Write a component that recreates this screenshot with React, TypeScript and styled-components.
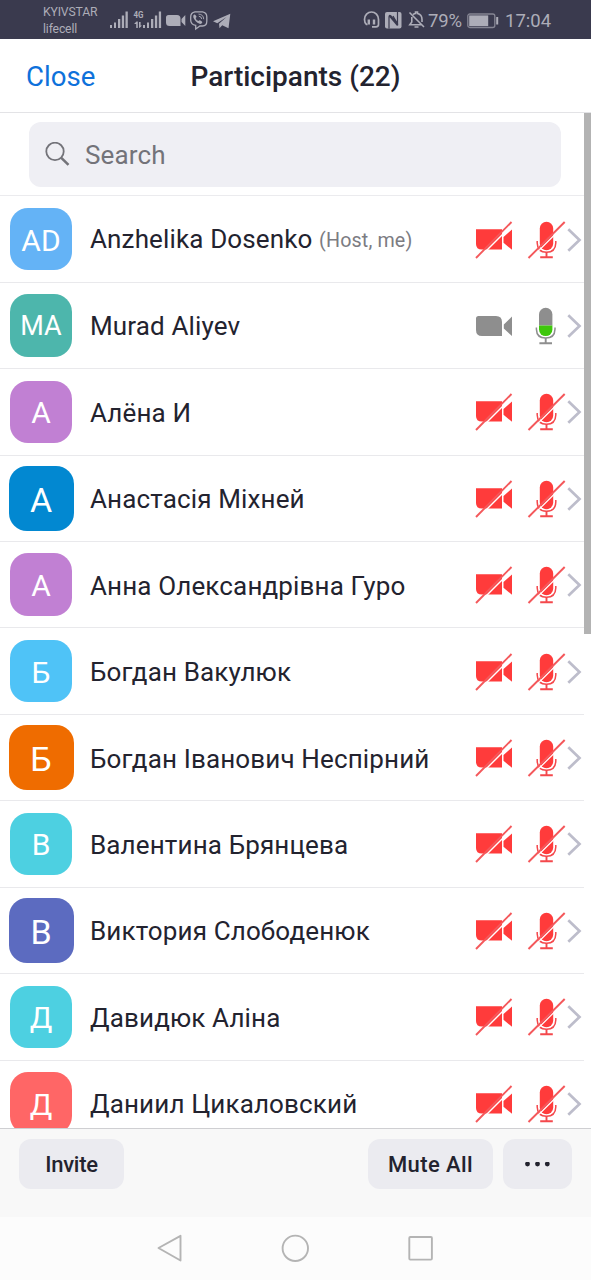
import React from 'react';
import styled, { createGlobalStyle } from 'styled-components';

const GlobalStyle = createGlobalStyle`
  * { box-sizing: border-box; }
  html, body { margin: 0; padding: 0; background: #fff; }
  body { font-family: Roboto, "Noto Sans", sans-serif; color: #23232f; overflow: hidden; }
  svg { display: block; flex: none; }
`;

const Screen = styled.div`
  width: 591px;
  height: 1280px;
  display: flex;
  flex-direction: column;
  overflow: hidden;
  background: #fff;
`;

const StatusBar = styled.div`
  height: 39px;
  flex: none;
  display: flex;
  align-items: center;
  background: #3a3a4e;
  color: #adadb8;
  padding: 0 40px 0 43px;
`;

const Carriers = styled.div`
  width: 67px;
  font-size: 12.2px;
  line-height: 17px;
  padding-top: 2px;
  letter-spacing: -0.15px;
  white-space: nowrap;
`;

const StatusRight = styled.div`
  margin-left: auto;
  display: flex;
  align-items: center;
  font-size: 18.5px;
  line-height: 22px;
  padding-top: 2px;
`;

const Percent = styled.span`
  width: 39px;
  letter-spacing: -0.2px;
`;

const Clock = styled.span`
  width: 46px;
  margin-left: 6px;
  white-space: nowrap;
`;

const Header = styled.header`
  height: 74px;
  flex: none;
  display: grid;
  grid-template-columns: 150px 1fr 150px;
  align-items: center;
  border-bottom: 1px solid #e3e3e6;
  padding-top: 2px;
`;

const CloseButton = styled.button`
  border: 0;
  background: none;
  padding: 1px 0 0 26px;
  text-align: left;
  font: 400 27.6px/32px Roboto, sans-serif;
  color: #0e71db;
`;

const Title = styled.h1`
  margin: 0;
  font-size: 28px;
  line-height: 32px;
  font-weight: 500;
  text-align: center;
  white-space: nowrap;
`;

const Body = styled.main`
  height: 1015px;
  flex: none;
  display: flex;
  overflow: hidden;
`;

const Content = styled.div`
  flex: none;
  width: 584px;
`;

const Scrollbar = styled.div`
  width: 7px;
  height: 521px;
  background: #b3b3b3;
`;

const SearchWrap = styled.div`
  height: 83.3px;
  padding: 9px 23px 0 29px;
  border-bottom: 1px solid #ebebee;
`;

const SearchBox = styled.div`
  height: 65px;
  border-radius: 12px;
  background: #efeff4;
  color: #737379;
  display: flex;
  align-items: center;
  gap: 14px;
  padding-left: 16px;
  font-size: 26px;
  letter-spacing: 0.15px;
`;

const Row = styled.div`
  height: 86.43px;
  display: flex;
  align-items: center;
  border-bottom: 1px solid #e9e9ec;
`;

const AvatarSlot = styled.div`
  width: 90px;
  padding-left: 8.5px;
`;

const AvatarFrame = styled.div`
  width: 65px;
  height: 65px;
  display: flex;
  align-items: center;
  justify-content: center;
`;

const Avatar = styled.div<{ $color: string; $large?: boolean }>`
  width: ${(p) => (p.$large ? 65 : 62.5)}px;
  height: ${(p) => (p.$large ? 65 : 62.5)}px;
  border-radius: 18px;
  background: ${(p) => p.$color};
  color: #fff;
  font-size: ${(p) => (p.$large ? 34 : 30)}px;
  line-height: 1;
  display: flex;
  align-items: center;
  justify-content: center;
  padding-top: 3px;
`;

const Initials = styled.span<{ $tight?: boolean }>`
  font-size: ${(p) => (p.$tight ? '27px' : 'inherit')};
`;

const Name = styled.div`
  flex: 1;
  font-size: 26px;
  line-height: 32px;
  letter-spacing: 0.14px;
  padding-top: 2px;
  white-space: nowrap;
`;

const Role = styled.span`
  margin-left: 6.5px;
  font-size: 19.7px;
  color: #7c7c82;
  vertical-align: 1px;
`;

const RowIcons = styled.div`
  flex: none;
  display: flex;
  width: 109px;
  padding-top: 1px;
`;

const Footer = styled.footer`
  height: 89px;
  flex: none;
  display: flex;
  align-items: flex-start;
  background: #f8f8f8;
  border-top: 1px solid #cfcfd2;
  padding: 10px 19px 0;
`;

const FooterButton = styled.button<{ $width: number }>`
  width: ${(p) => p.$width}px;
  height: 50px;
  border: 0;
  border-radius: 12px;
  background: #ebebf0;
  color: #23232f;
  font: 500 22px/26px Roboto, sans-serif;
  padding: 2px 0 0;
  display: flex;
  align-items: center;
  justify-content: center;
`;

const ButtonLabel = styled.span<{ $spacing: number }>`
  letter-spacing: ${(p) => p.$spacing}px;
`;

const FooterGroup = styled.div`
  margin-left: auto;
  display: flex;
  gap: 10px;
`;

const NavBar = styled.nav`
  flex: 1;
  display: flex;
  justify-content: center;
  background: #fcfcfc;
  padding: 16px 2px 0 0;
  gap: 95px;
`;

const StatusIcons = () => (
  <svg width="124" height="39" viewBox="110 0 124 39" fill="#adadb8">
    <path d="M110 25h2v3h-2zM114 22.500h2v5.500h-2zM118 19h2.300v9h-2.300zM121.800 15.500h2.300v12.500h-2.300zM125.500 11.500h2.300v16.500h-2.300z" />
    <path d="M143 25h2v3h-2zM147 22.500h2v5.500h-2zM151 19h2.300v9h-2.300zM154.900 15.500h2.300v12.500h-2.300zM158.800 11.500h2.300v16.500h-2.300z" />
    <text x="133.500" y="18.300" fontSize="9.500" fontWeight="700" fontFamily="Roboto, sans-serif" textLength="10" lengthAdjust="spacingAndGlyphs">4G</text>
    <path d="M134 24l2.500-2.500h1.300v6.500h-1.600v-4zM139 22h1.600v3.500h1.400l-2.500 2.500-.5-.5z" />
    <path d="M168.500 15h8.500q3.500 0 3.500 3.500v7.500h-11q-3.500 0-3.500-3.500v-5q0-2.500 2.500-2.500zM181.500 19l3.800-4v11l-3.800-4z" />
    <path d="M195 11.800h7.500q4.300.8 4.300 5v4.500q0 4.500-4.300 4.700h-2.500l-4.300 3v-3.600q-5-.8-5-5.400v-3q0-4.500 4.300-5.200z" fill="none" stroke="#adadb8" strokeWidth="1.300" />
    <path d="M194.300 14.600q-1.500.8-1 2.600 1.700 4.700 6.300 6.600 1.800.6 2.700-1.300.3-.9-2.300-2.300-.8-.2-1.600.9-2.300-.8-2.800-3.100 1.200-.8.9-1.500-1.300-2.200-2.200-1.900z" />
    <path d="M198.500 14.100q5 .2 5.200 5.100M198.800 16.200q2.700.2 2.900 2.800" fill="none" stroke="#adadb8" strokeWidth=".9" />
    <path d="M213 21.200L230.300 13.700 228.500 28.300 222.200 25.300 219.500 28.300 219 23.800 226.500 17 217.300 23.200z" />
  </svg>
);

const DeviceIcons = () => (
  <svg width="65" height="39" viewBox="364 1 65 39" fill="none" stroke="#adadb8">
    <path d="M368.500 24.500h-1q-2-1.500-2-5a7 7.500 0 0 1 14 0v5q0 2.300-2.500 2.300h-4" strokeWidth="1.700" />
    <path d="M369.800 19.500v5M375 19.500v5" strokeWidth="2.400" />
    <path d="M388 12h12.500q2 0 2 2v12.500q0 2-2 2h-12.500q-2 0-2-2v-12.500q0-2 2-2z" fill="#adadb8" stroke="none" />
    <path d="M390 28.500v-11.500q0-2.500 2-1l6.500 8V12M394 16l5 8.500M390.500 16l8 9.500" stroke="#3a3a4e" strokeWidth="1.200" />
    <path d="M410.500 12.500l14.500 14.500M414 14.500q1.500-1 2.500-1v-1.500h2v1.500q4.500 1 4.500 6v2.500M412.800 17v5l-2 2.800h11.500M415.500 27h4" strokeWidth="1.600" />
  </svg>
);

const Battery = () => (
  <svg width="32" height="18" viewBox="0 0 32 18">
    <rect x=".8" y="2" width="27" height="13.500" rx="2" fill="none" stroke="#adadb8" strokeOpacity=".65" strokeWidth="1.300" />
    <rect x="2.200" y="3.400" width="19" height="10.700" fill="#adadb8" />
    <rect x="29.200" y="5" width="2" height="7.500" fill="#adadb8" />
  </svg>
);

const SearchIcon = () => (
  <svg width="26" height="26" viewBox="45 141.800 26 26" fill="none" stroke="#737379">
    <circle cx="55" cy="151.200" r="8.700" strokeWidth="1.800" />
    <path d="M61.300 157.700L68.500 164.700" strokeWidth="2.600" />
  </svg>
);

const MutedIcons = () => (
  <svg width="92" height="38" viewBox="475 220 92 38">
    <path d="M476 228.300h26v20.300h-20q-6 0-6-5.500zM503.500 236L512 228.500v20.300l-8.500-7z" fill="#ff3b3b" />
    <path d="M477.500 258.500L512.500 223.500" stroke="#fff" strokeWidth="1.400" />
    <path d="M476 257L511.500 221" stroke="#f4585b" strokeWidth="1.900" />
    <rect x="539.800" y="220.800" width="13.400" height="28.500" rx="6.700" fill="#ff3b3b" />
    <path d="M537.200 240v2q.3 9.300 9.300 9.300t9.300-9.300v-2" fill="none" stroke="#f4484c" strokeWidth="1.500" />
    <path d="M546.500 251v5M540.200 256.300h12.600" fill="none" stroke="#f4484c" strokeWidth="1.900" />
    <path d="M530 258.300L566 222.500" stroke="#fff" strokeWidth="1.200" />
    <path d="M528.500 257L564.700 221" stroke="#f4585b" strokeWidth="1.900" />
  </svg>
);

const ActiveIcons = () => (
  <svg width="92" height="38" viewBox="475 306.400 92 38">
    <path d="M478.500 315.500h17.500q6 0 6 6v14h-20q-6 0-6-6v-11.500q0-2.500 2.500-2.500zM503.800 324L512 316v19.500l-8.200-7.500z" fill="#8e8e8e" />
    <path d="M539 324.800v-11a6.700 6.700 0 0 1 13.400 0v11z" fill="#8e8e8e" />
    <path d="M539 324.800h13.400v4a6.700 6.700 0 0 1-13.400 0z" fill="#3ec70b" />
    <path d="M536.400 327v1.500q.3 9 9.300 9t9.300-9v-1.500" fill="none" stroke="#8e8e8e" strokeWidth="1.500" />
    <path d="M545.700 337.500v5M539.400 342.700h12.600" fill="none" stroke="#8e8e8e" strokeWidth="1.900" />
  </svg>
);

const Chevron = () => (
  <svg width="16" height="38" viewBox="567 220 16 38" fill="none" stroke="#bdbdcb" strokeWidth="2.700">
    <path d="M568.300 228.300L579.500 239 568.300 249.700" />
  </svg>
);

interface Participant {
  initials: string;
  name: string;
  color: string;
  role?: string;
  large?: boolean;
  active?: boolean;
}

const participants: Participant[] = [
  { initials: 'AD', name: 'Anzhelika Dosenko', color: '#64b3f6', role: '(Host, me)' },
  { initials: 'MA', name: 'Murad Aliyev', color: '#4db6ac', active: true },
  { initials: 'А', name: 'Алёна И', color: '#c180d3' },
  { initials: 'А', name: 'Анастасія Міхней', color: '#0288d1', large: true },
  { initials: 'А', name: 'Анна Олександрівна Гуро', color: '#c180d3' },
  { initials: 'Б', name: 'Богдан Вакулюк', color: '#4fc3f7' },
  { initials: 'Б', name: 'Богдан Іванович Неспірний', color: '#ef6c00', large: true },
  { initials: 'В', name: 'Валентина Брянцева', color: '#4dd0e1' },
  { initials: 'В', name: 'Виктория Слободенюк', color: '#5c6bc0', large: true },
  { initials: 'Д', name: 'Давидюк Аліна', color: '#4dd0e1' },
  { initials: 'Д', name: 'Даниил Цикаловский', color: '#ff6666' },
];

const ParticipantRow = ({ person }: { person: Participant }) => (
  <Row>
    <AvatarSlot>
      <AvatarFrame>
        <Avatar $color={person.color} $large={person.large}>
          <Initials $tight={person.initials === 'MA'}>{person.initials}</Initials>
        </Avatar>
      </AvatarFrame>
    </AvatarSlot>
    <Name>
      {person.name}
      {person.role && <Role>{person.role}</Role>}
    </Name>
    <RowIcons>
      {person.active ? <ActiveIcons /> : <MutedIcons />}
      <Chevron />
    </RowIcons>
  </Row>
);

export default function App() {
  return (
    <Screen>
      <GlobalStyle />
      <StatusBar>
        <Carriers>
          <div>KYIVSTAR</div>
          <div>lifecell</div>
        </Carriers>
        <StatusIcons />
        <StatusRight>
          <DeviceIcons />
          <Percent>79%</Percent>
          <Battery />
          <Clock>17:04</Clock>
        </StatusRight>
      </StatusBar>
      <Header>
        <CloseButton>Close</CloseButton>
        <Title>Participants (22)</Title>
      </Header>
      <Body>
        <Content>
          <SearchWrap>
            <SearchBox>
              <SearchIcon />
              <span>Search</span>
            </SearchBox>
          </SearchWrap>
          {participants.map((person) => (
            <ParticipantRow key={person.name} person={person} />
          ))}
        </Content>
        <Scrollbar />
      </Body>
      <Footer>
        <FooterButton $width={105}>
          <ButtonLabel $spacing={-0.3}>Invite</ButtonLabel>
        </FooterButton>
        <FooterGroup>
          <FooterButton $width={125}>
            <ButtonLabel $spacing={0.4}>Mute All</ButtonLabel>
          </FooterButton>
          <FooterButton $width={69} aria-label="More">
            <svg width="28" height="6" viewBox="0 0 28 6" fill="#23232f">
              <circle cx="3.500" cy="2" r="2.400" />
              <circle cx="13.500" cy="2" r="2.400" />
              <circle cx="23.300" cy="2" r="2.400" />
            </svg>
          </FooterButton>
        </FooterGroup>
      </Footer>
      <NavBar>
        <svg width="30" height="30" viewBox="154.500 1233 30 30" fill="none" stroke="#b4b4b4" strokeWidth="1.900" strokeLinejoin="round">
          <path d="M158 1248L180 1235.800V1260.500z" />
        </svg>
        <svg width="30" height="30" viewBox="280 1233 30 30" fill="none" stroke="#b4b4b4" strokeWidth="1.900">
          <circle cx="295.300" cy="1248.300" r="12.700" />
        </svg>
        <svg width="30" height="30" viewBox="405 1233 30 30" fill="none" stroke="#b4b4b4" strokeWidth="1.900">
          <rect x="409.300" y="1237" width="22.600" height="22.600" rx="1" />
        </svg>
      </NavBar>
    </Screen>
  );
}
